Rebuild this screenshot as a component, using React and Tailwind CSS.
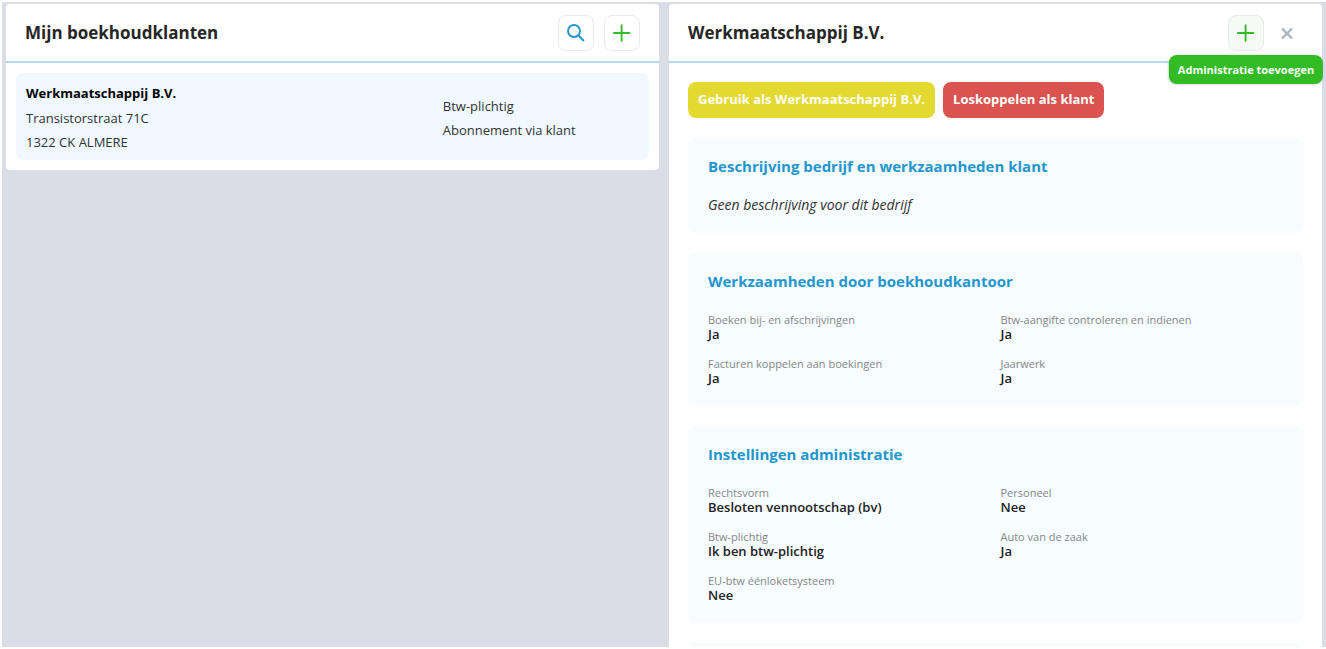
import React from 'react';

const workItems = [
  { label: 'Boeken bij- en afschrijvingen', value: 'Ja' },
  { label: 'Btw-aangifte controleren en indienen', value: 'Ja' },
  { label: 'Facturen koppelen aan boekingen', value: 'Ja' },
  { label: 'Jaarwerk', value: 'Ja' },
];

const settings = [
  { label: 'Rechtsvorm', value: 'Besloten vennootschap (bv)' },
  { label: 'Personeel', value: 'Nee' },
  { label: 'Btw-plichtig', value: 'Ik ben btw-plichtig' },
  { label: 'Auto van de zaak', value: 'Ja' },
  { label: 'EU-btw éénloketsysteem', value: 'Nee' },
];

function SearchIcon() {
  return (
    <svg className="size-5" viewBox="0 0 20 20" fill="none" stroke="#2196d0" strokeWidth="1.9" strokeLinecap="round">
      <circle cx="8" cy="8" r="6" />
      <path d="M12.4 12.5l5 5" />
    </svg>
  );
}

function PlusIcon() {
  return (
    <svg className="size-5" viewBox="0 0 20 20" fill="none" stroke="#33bb26" strokeWidth="1.9" strokeLinecap="round">
      <path d="M9.6 2.2v15.6M1.8 10h15.6" />
    </svg>
  );
}

function CloseIcon() {
  return (
    <svg className="size-3" viewBox="0 0 12 12" fill="none" stroke="#a7b6bf" strokeWidth="2.4">
      <path d="M1 1.5l10 10M11 1.5L1 11.5" />
    </svg>
  );
}

function IconButton({ label, active, children }) {
  return (
    <button
      type="button"
      aria-label={label}
      className={`flex size-9 items-center justify-center rounded-lg border border-[#e8eaea] ${active ? 'bg-[#f6faf7]' : 'bg-white'}`}
    >
      {children}
    </button>
  );
}

function PanelHeader({ title, children }) {
  return (
    <header className="flex h-[59px] shrink-0 items-center justify-between border-b-2 border-[#b4d9ec] px-[19px]">
      <h1 className="text-[17px] font-bold text-[#262626]">{title}</h1>
      {children}
    </header>
  );
}

function Card({ title, children }) {
  return (
    <section className="shrink-0 rounded-lg bg-[#f7fcff] px-5 pt-4 pb-5">
      <h2 className="mb-[19px] text-[15px] leading-6 font-bold text-[#2496cd]">{title}</h2>
      {children}
    </section>
  );
}

function Fields({ items }) {
  return (
    <dl className="grid grid-cols-2 gap-x-2.5 gap-y-3.5">
      {items.map((item) => (
        <div key={item.label}>
          <dt className="text-[11px] leading-[15px] text-[#858788]">{item.label}</dt>
          <dd className="text-[13px] leading-[15px] font-semibold text-[#222]">{item.value}</dd>
        </div>
      ))}
    </dl>
  );
}

function ClientList() {
  return (
    <div className="min-w-0 flex-1 self-start rounded bg-white">
      <PanelHeader title="Mijn boekhoudklanten">
        <div className="flex gap-2.5">
          <IconButton label="Zoeken">
            <SearchIcon />
          </IconButton>
          <IconButton label="Klant toevoegen">
            <PlusIcon />
          </IconButton>
        </div>
      </PanelHeader>
      <div className="p-2.5">
        <a
          href="#werkmaatschappij"
          className="grid grid-cols-[68%_1fr] items-center rounded-lg bg-[#f0f9ff] px-2.5 pt-2 pb-1.5 text-[13px] leading-6 text-[#333]"
        >
          <div>
            <p className="leading-[25px] font-bold text-black">Werkmaatschappij B.V.</p>
            <p>Transistorstraat 71C</p>
            <p>1322 CK ALMERE</p>
          </div>
          <div>
            <p>Btw-plichtig</p>
            <p>Abonnement via klant</p>
          </div>
        </a>
      </div>
    </div>
  );
}

function ClientDetail() {
  return (
    <div className="flex min-w-0 flex-1 flex-col rounded-t bg-white">
      <PanelHeader title="Werkmaatschappij B.V.">
        <div className="flex items-center gap-[7px]">
          <div className="relative">
            <IconButton label="Administratie toevoegen" active>
              <PlusIcon />
            </IconButton>
            <span
              role="tooltip"
              className="absolute top-full left-1/2 z-10 mt-1 -translate-x-1/2 rounded-lg bg-[#33bb26] px-[9px] text-[11px] leading-[29px] font-bold whitespace-nowrap text-white shadow-sm"
            >
              Administratie toevoegen
            </span>
          </div>
          <button type="button" aria-label="Sluiten" className="flex size-8 items-center justify-center">
            <CloseIcon />
          </button>
        </div>
      </PanelHeader>
      <div className="flex flex-col gap-5 px-[19px] pt-[19px]">
        <div className="flex gap-2 text-[13px] font-bold text-white">
          <button type="button" className="h-9 rounded-lg bg-[#e3d931] px-2.5">
            Gebruik als Werkmaatschappij B.V.
          </button>
          <button type="button" className="h-9 rounded-lg bg-[#da534f] px-2.5">
            Loskoppelen als klant
          </button>
        </div>
        <Card title="Beschrijving bedrijf en werkzaamheden klant">
          <p className="text-sm leading-4 text-[#333] italic">Geen beschrijving voor dit bedrijf</p>
        </Card>
        <Card title="Werkzaamheden door boekhoudkantoor">
          <Fields items={workItems} />
        </Card>
        <Card title="Instellingen administratie">
          <Fields items={settings} />
        </Card>
        {/* Next card starts below the fold */}
        <div className="h-24 shrink-0 rounded-lg bg-[#f7fcff]" />
      </div>
    </div>
  );
}

function App() {
  return (
    <div className="h-screen overflow-hidden bg-white py-0.5 pl-0.5 font-['Open_Sans',sans-serif]">
      <main className="flex h-full gap-2.5 overflow-hidden bg-[#dbdde6] px-1 pt-0.5">
        <ClientList />
        <ClientDetail />
      </main>
    </div>
  );
}

export default App;
